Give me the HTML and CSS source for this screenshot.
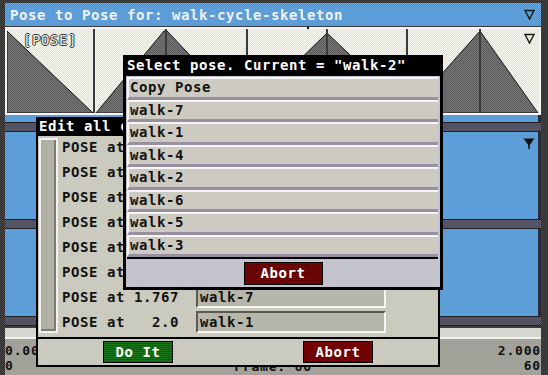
FILE: index.html
```html
<!DOCTYPE html>
<html lang="en">
<head>
  <meta charset="UTF-8" />
  <title>Pose to Pose</title>
  <link rel="stylesheet" href="styles.css">
</head>
<body>

<div class="app">
  <!-- window title -->
  <div class="titlebar">
    <span>Pose to Pose for: walk-cycle-skeleton</span>
    <svg class="menu-tri" width="11" height="11" viewBox="0 0 11 11"><path d="M1 1.5 H10 L5.5 10 Z" fill="none" stroke="#161616" stroke-width="1.4"/></svg>
  </div>

  <!-- pose curve -->
  <div class="graph">
    <svg class="curve" width="532" height="84" viewBox="0 0 532 84">
      <defs>
        <pattern id="dots" width="2" height="2" patternUnits="userSpaceOnUse">
          <rect width="2" height="2" fill="#767676"/>
          <rect width="1" height="1" fill="#5c5c5c"/>
          <rect x="1" y="1" width="1" height="1" fill="#5c5c5c"/>
        </pattern>
      </defs>
      <g fill="url(#dots)" stroke="#141414" stroke-width="1">
        <polygon points="0,2 86,84 0,84"/>
        <polygon points="89,84 157,2 160,2 238,84"/>
        <polygon points="238,84 320,4 404,84"/>
        <polygon points="400,84 473,2 531,84"/>
      </g>
      <g stroke="#3a3a3a" stroke-width="2">
        <line x1="87" y1="0" x2="87" y2="84"/>
        <line x1="159" y1="0" x2="159" y2="84"/>
        <line x1="240" y1="0" x2="240" y2="84"/>
        <line x1="320" y1="0" x2="320" y2="84"/>
        <line x1="400" y1="0" x2="400" y2="84"/>
        <line x1="473" y1="0" x2="473" y2="84"/>
      </g>
    </svg>
    <span class="graph-label">[POSE]</span>
    <svg class="graph-menu" width="11" height="11" viewBox="0 0 11 11"><path d="M1 1.5 H10 L5.5 10 Z" fill="none" stroke="#161616" stroke-width="1.4"/></svg>
    <span class="frame-mark"></span>
  </div>

  <!-- channel lanes -->
  <div class="lanes">
    <div class="lane lane-top"></div>
    <div class="divider"></div>
    <div class="lane">
      <svg class="lane-menu" width="12" height="12" viewBox="0 0 12 12"><path d="M0.5 0.5 H11.5 L6 8 Z" fill="#101010"/><path d="M6 7 V11" stroke="#101010" stroke-width="1.5"/></svg>
    </div>
    <div class="divider"></div>
    <div class="lane"></div>
    <div class="divider"></div>
  </div>

  <div class="strip"></div>

  <div class="footer">
    <div class="footer-col"><div>0.00</div><div>0</div></div>
    <div class="footer-mid">Frame: 60</div>
    <div class="footer-col footer-right"><div>2.000</div><div>60</div></div>
  </div>
</div>

<!-- Edit all dialog (values under the popup are left blank) -->
<div class="dialog edit-dialog">
  <div class="dialog-title">Edit all c</div>
  <div class="edit-body">
    <div class="scrollbar"></div>
    <div class="pose-rows">
      <div class="pose-row"><span class="pose-label">POSE at</span><span class="field"></span></div>
      <div class="pose-row"><span class="pose-label">POSE at</span><span class="field"></span></div>
      <div class="pose-row"><span class="pose-label">POSE at</span><span class="field"></span></div>
      <div class="pose-row"><span class="pose-label">POSE at</span><span class="field"></span></div>
      <div class="pose-row"><span class="pose-label">POSE at</span><span class="field"></span></div>
      <div class="pose-row"><span class="pose-label">POSE at</span><span class="field"></span></div>
      <div class="pose-row"><span class="pose-label">POSE at 1.767</span><span class="field">walk-7</span></div>
      <div class="pose-row"><span class="pose-label">POSE at   2.0</span><span class="field">walk-1</span></div>
    </div>
  </div>
  <div class="button-bar two">
    <div class="btn btn-go">Do It</div>
    <div class="btn btn-stop">Abort</div>
  </div>
</div>

<!-- Select pose popup -->
<div class="dialog select-dialog">
  <div class="dialog-title">Select pose. Current = "walk-2"</div>
  <div class="choices">
    <div class="choice">Copy Pose</div>
    <div class="choice">walk-7</div>
    <div class="choice">walk-1</div>
    <div class="choice">walk-4</div>
    <div class="choice">walk-2</div>
    <div class="choice">walk-6</div>
    <div class="choice">walk-5</div>
    <div class="choice">walk-3</div>
  </div>
  <div class="button-bar lilac">
    <div class="btn btn-stop wide">Abort</div>
  </div>
</div>

</body>
</html>
```

FILE: styles.css
```css
body {
    margin: 0;
    background: #3a3a3a;
    font-family: "DejaVu Sans Mono", "Liberation Mono", monospace;
    font-weight: bold;
    font-size: 14px;
    letter-spacing: 0.57px;
    color: #121212;
}

/* Main window */
.app {
    width: 548px;
    height: 375px;
    box-sizing: border-box;
    padding: 3px 7px 0 5px;
    display: flex;
    flex-direction: column;
    overflow: hidden;
    background: repeating-conic-gradient(#2c2c2c 0 25%, #4a4a4a 0 50%) 0 0 / 2px 2px;
}

.titlebar {
    height: 23px;
    flex-shrink: 0;
    display: flex;
    align-items: center;
    justify-content: space-between;
    padding: 0 6px 0 5px;
    color: #eef2f8;
    background: repeating-conic-gradient(#5494d0 0 25%, #66a6e0 0 50%) 0 0 / 2px 2px;
}

.graph {
    position: relative;
    height: 88px;
    flex-shrink: 0;
    box-sizing: border-box;
    margin-top: 1px;
    border: 2px solid #f6f6f4;
    background: repeating-conic-gradient(#e2e2da 0 25%, #f6f6ee 0 50%) 0 0 / 2px 2px;
}

.curve {
    display: block;
}

.graph-label {
    position: absolute;
    left: 16px;
    top: 3px;
    font-weight: normal;
    color: #ececE4;
    text-shadow: -1px 0 #3a3a3a, 1px 0 #3a3a3a, 0 -1px #3a3a3a, 0 1px #3a3a3a;
}

.graph-menu {
    position: absolute;
    left: 517px;
    top: 4px;
}

.frame-mark {
    position: absolute;
    left: 300px;
    top: -2px;
    width: 2px;
    height: 2px;
    background: #101010;
}

/* Channel lanes */
.lanes {
    display: flex;
    flex-direction: column;
    flex-shrink: 0;
}

.lane {
    position: relative;
    height: 87px;
    border-right: 3px solid #2a2a36;
    background: repeating-conic-gradient(#5494d0 0 25%, #66a6e0 0 50%) 0 0 / 2px 2px;
}

.lane-top {
    height: 7px;
}

.lane-menu {
    position: absolute;
    right: 3px;
    top: 6px;
}

.divider {
    height: 10px;
    box-sizing: border-box;
    border-top: 1px solid #1e1e26;
    border-bottom: 1px solid #1e1e26;
    background: repeating-conic-gradient(#4a4a5a 0 25%, #5c5c6c 0 50%) 0 0 / 2px 2px;
}

.strip {
    height: 13px;
    flex-shrink: 0;
    box-sizing: border-box;
    border-top: 2px solid #3c3c3c;
    border-bottom: 2px solid #f2f2f0;
    background: #d6d6ce;
}

.footer {
    flex: 1;
    display: grid;
    grid-template-columns: 1fr auto 1fr;
    padding-top: 4px;
    font-size: 13px;
    line-height: 15px;
    letter-spacing: 0.8px;
    background: repeating-conic-gradient(#9a9a92 0 25%, #aaaaa2 0 50%) 0 0 / 2px 2px;
}

.footer-right {
    text-align: right;
}

.footer-mid {
    align-self: end;
    padding-bottom: 1px;
}

/* Dialogs */
.dialog {
    position: absolute;
    box-sizing: border-box;
    border: 2px solid #000;
    display: flex;
    flex-direction: column;
    background: repeating-conic-gradient(#c2c2b6 0 25%, #d2d2c6 0 50%) 0 0 / 2px 2px;
}

.dialog-title {
    flex-shrink: 0;
    background: #000;
    color: #fff;
    white-space: nowrap;
    overflow: hidden;
}

.edit-dialog {
    left: 36px;
    top: 117px;
    width: 404px;
    height: 250px;
}

.edit-dialog .dialog-title {
    height: 17px;
    line-height: 15px;
    padding-left: 1px;
}

.edit-body {
    display: flex;
    gap: 4px;
    height: 201px;
    flex-shrink: 0;
    border-bottom: 2px solid #000;
}

.scrollbar {
    width: 19px;
    height: 195px;
    margin: 2px 0 0 1px;
    box-sizing: border-box;
    border: 2px solid #f2f2f0;
    box-shadow: inset -2px -2px #7c7c74;
    background: #b0b0a4;
}

.pose-rows {
    display: flex;
    flex-direction: column;
}

.pose-row {
    display: flex;
    height: 25px;
}

.pose-label {
    width: 134px;
    line-height: 22px;
    white-space: pre;
}

.field {
    width: 190px;
    height: 22px;
    box-sizing: border-box;
    padding-left: 2px;
    line-height: 19px;
    border-top: 2px solid #5a5a52;
    border-left: 2px solid #5a5a52;
    border-right: 2px solid #f4f4f2;
    border-bottom: 2px solid #f4f4f2;
    background: #b6b6aa;
}

.button-bar {
    flex: 1;
    display: flex;
    align-items: center;
    justify-content: center;
}

.button-bar.two {
    display: grid;
    grid-template-columns: 1fr 1fr;
    justify-items: center;
}

.button-bar.lilac {
    background: repeating-conic-gradient(#bcbcc8 0 25%, #cccad4 0 50%) 0 0 / 2px 2px;
}

.btn {
    width: 70px;
    height: 22px;
    box-sizing: border-box;
    border: 1px solid #000;
    color: #fff;
    text-align: center;
    line-height: 20px;
}

.btn-go {
    background: repeating-linear-gradient(#1c741c 0 1px, #0c5e0c 1px 2px);
}

.btn-stop {
    background: repeating-linear-gradient(#760606 0 1px, #640000 1px 2px);
}

.btn.wide {
    width: 79px;
    height: 23px;
    line-height: 21px;
}

.select-dialog {
    left: 123px;
    top: 55px;
    width: 320px;
    height: 235px;
    border-width: 3px;
    background: repeating-conic-gradient(#bcbcc8 0 25%, #cccad4 0 50%) 0 0 / 2px 2px;
}

.select-dialog .dialog-title {
    height: 18px;
    line-height: 15px;
    padding-left: 1px;
}

.choices {
    flex-shrink: 0;
    margin: 1px 2px 1px 1px;
    border-bottom: 2px solid #000;
}

.choice {
    height: 22.5px;
    box-sizing: border-box;
    padding-left: 1px;
    line-height: 17px;
    border-top: 2px solid #f6f6f4;
    border-left: 2px solid #f6f6f4;
    border-bottom: 3px solid #9890a2;
    background: repeating-conic-gradient(#c6c4ba 0 25%, #d4d2c8 0 50%) 0 0 / 2px 2px;
}
```
